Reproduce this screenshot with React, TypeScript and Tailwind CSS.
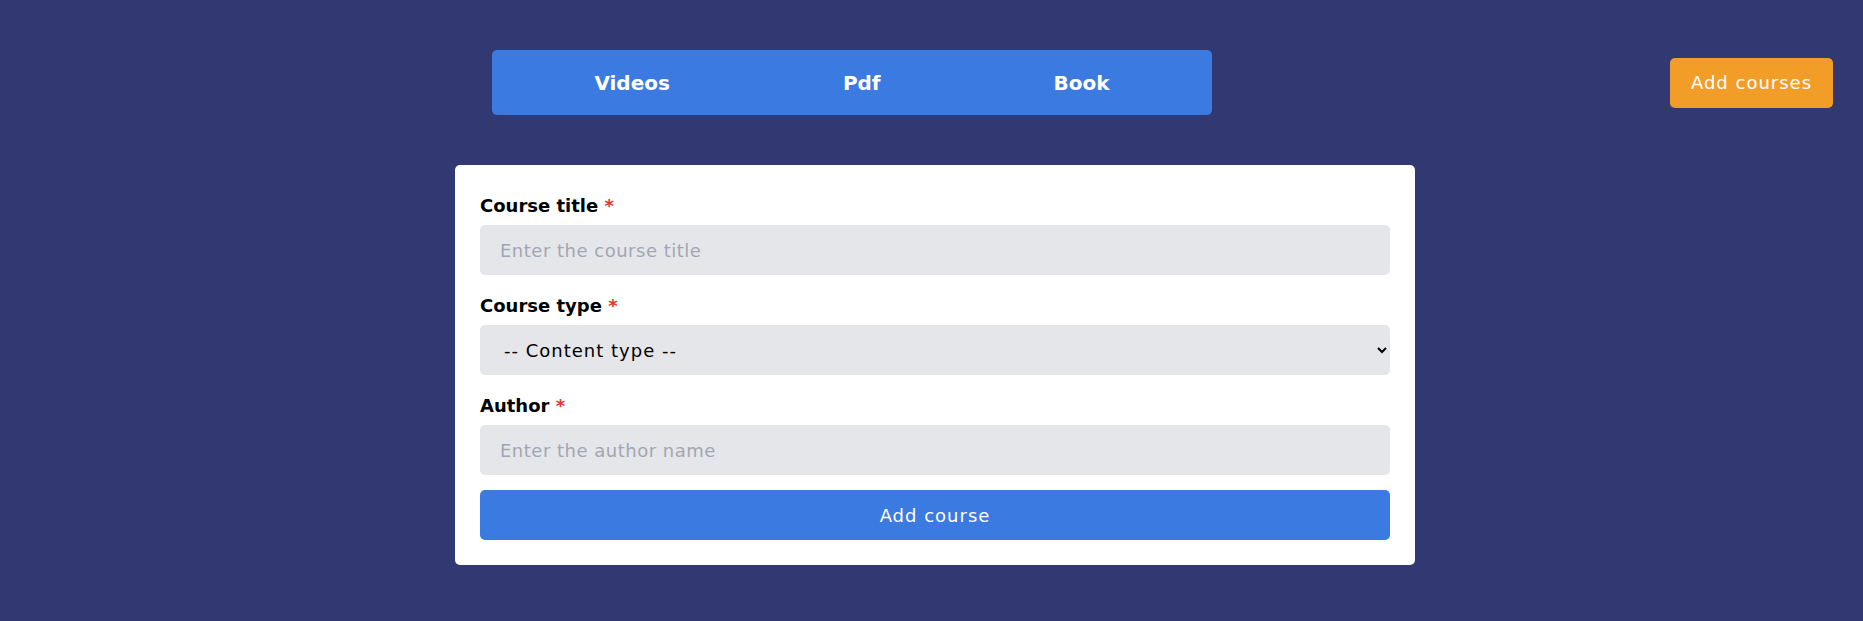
import { useState } from "react";

const font = { fontFamily: "'DejaVu Sans', 'Noto Sans', sans-serif" };

export default function App() {
    return (
        <div className="min-h-[621px] w-full bg-[#323872] pt-[50px]" style={font}>
            <Header></Header>
            <div className="pl-[7px]">
                <CourseForm></CourseForm>
            </div>
        </div>
    );
}

function Header() {
    return (
        <header className="flex items-center justify-between pl-[34px] pr-[30px]">
            <div></div>
            <nav className="flex h-[65px] w-[720px] items-center justify-center gap-[173px] rounded-[5px] bg-[#3b7ae0] text-[20px] font-bold text-white">
                <a href="#videos">Videos</a>
                <a href="#pdf">Pdf</a>
                <a href="#book">Book</a>
            </nav>
            <button className="h-[50px] w-[163px] rounded-[5px] bg-[#f29d27] text-[18px] tracking-[1px] text-white">
                Add courses
            </button>
        </header>
    );
}

function CourseForm() {
    const [title, setTitle] = useState("");
    const [type, setType] = useState("");
    const [author, setAuthor] = useState("");

    return (
        <form
            className="mx-auto mt-[50px] flex w-[960px] flex-col rounded-[5px] bg-white p-[25px]"
            onSubmit={(e) => e.preventDefault()}
        >
            <Label text="Course title"></Label>
            <input
                value={title}
                onChange={(e) => setTitle(e.target.value)}
                placeholder="Enter the course title"
                className="mt-[6px] h-[50px] w-full rounded-[5px] bg-[#e5e6ea] px-5 text-[18px] tracking-[0.5px] text-black outline-none placeholder:text-[#a2a6b2]"
            />

            <div className="mt-[15px]">
                <Label text="Course type"></Label>
            </div>
            <select
                value={type}
                onChange={(e) => setType(e.target.value)}
                className="mt-[6px] h-[50px] w-full rounded-[5px] bg-[#e5e6ea] pl-5 pr-2 text-[18px] tracking-[1px] text-black outline-none"
            >
                <option value="">-- Content type --</option>
                <option value="videos">Videos</option>
                <option value="pdf">Pdf</option>
                <option value="book">Book</option>
            </select>

            <div className="mt-[15px]">
                <Label text="Author"></Label>
            </div>
            <input
                value={author}
                onChange={(e) => setAuthor(e.target.value)}
                placeholder="Enter the author name"
                className="mt-[6px] h-[50px] w-full rounded-[5px] bg-[#e5e6ea] px-5 text-[18px] tracking-[0.5px] text-black outline-none placeholder:text-[#a2a6b2]"
            />

            <button
                type="submit"
                className="mt-[15px] h-[50px] w-full rounded-[5px] bg-[#3b7ae0] text-[18px] font-medium tracking-[1px] text-white"
            >
                Add course
            </button>
        </form>
    );
}

function Label({ text }: { text: string }) {
    return (
        <label className="block pt-[2px] text-[18px] font-bold leading-[27px] text-black">
            {text} <span className="text-[#e3342f]">*</span>
        </label>
    );
}
